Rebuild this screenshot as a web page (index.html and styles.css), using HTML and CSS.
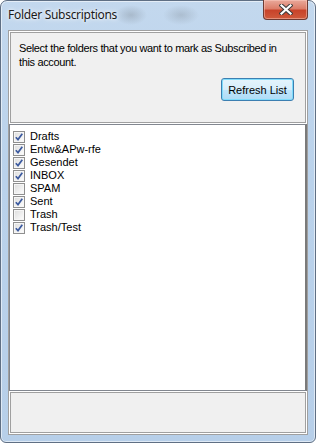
FILE: index.html
```html
<!DOCTYPE html>
<html lang="en">
<head>
    <meta charset="UTF-8">
    <title>Folder Subscriptions</title>
    <link rel="stylesheet" href="styles.css">
</head>
<body>
    <div class="window">
        <div class="titlebar">
            <span class="title">Folder Subscriptions</span>
            <button class="close-btn" title="Close">
                <svg width="14" height="11" viewBox="0 0 14 11">
                    <path d="M2.5 1.5 L11.5 9.5 M11.5 1.5 L2.5 9.5" stroke="#3b3b3b" stroke-width="4.2" stroke-linecap="square"/>
                    <path d="M2.5 1.5 L11.5 9.5 M11.5 1.5 L2.5 9.5" stroke="#fff" stroke-width="2.2" stroke-linecap="square"/>
                </svg>
            </button>
        </div>

        <div class="client">
            <div class="panel top-panel">
                <p class="intro">Select the folders that you want to mark as Subscribed in this account.</p>
                <div class="actions">
                    <button class="btn default">Refresh List</button>
                </div>
            </div>

            <ul class="folder-list">
                <li><span class="check on"><svg width="8" height="8" viewBox="0 0 8 8"><path d="M0.8 4.2 L3 6.6 L7.3 0.8" fill="none" stroke="#3c5a9f" stroke-width="1.7"/></svg></span>Drafts</li>
                <li><span class="check on"><svg width="8" height="8" viewBox="0 0 8 8"><path d="M0.8 4.2 L3 6.6 L7.3 0.8" fill="none" stroke="#3c5a9f" stroke-width="1.7"/></svg></span>Entw&amp;APw-rfe</li>
                <li><span class="check on"><svg width="8" height="8" viewBox="0 0 8 8"><path d="M0.8 4.2 L3 6.6 L7.3 0.8" fill="none" stroke="#3c5a9f" stroke-width="1.7"/></svg></span>Gesendet</li>
                <li><span class="check on"><svg width="8" height="8" viewBox="0 0 8 8"><path d="M0.8 4.2 L3 6.6 L7.3 0.8" fill="none" stroke="#3c5a9f" stroke-width="1.7"/></svg></span>INBOX</li>
                <li><span class="check"></span>SPAM</li>
                <li><span class="check on"><svg width="8" height="8" viewBox="0 0 8 8"><path d="M0.8 4.2 L3 6.6 L7.3 0.8" fill="none" stroke="#3c5a9f" stroke-width="1.7"/></svg></span>Sent</li>
                <li><span class="check"></span>Trash</li>
                <li><span class="check on"><svg width="8" height="8" viewBox="0 0 8 8"><path d="M0.8 4.2 L3 6.6 L7.3 0.8" fill="none" stroke="#3c5a9f" stroke-width="1.7"/></svg></span>Trash/Test</li>
            </ul>

            <div class="panel bottom-panel"></div>
        </div>
    </div>
</body>
</html>
```

FILE: styles.css
```css
body {
    margin: 0;
    background-color: #fff;
    font-family: "Liberation Sans", Arial, sans-serif;
}

.window {
    position: relative;
    width: 316px;
    height: 443px;
    box-sizing: border-box;
    border: 1px solid #5f6f84;
    border-radius: 7px 7px 6px 6px;
    padding: 0 7px 7px 7px;
    background:
        radial-gradient(ellipse 16px 10px at 130px 14px, rgba(120, 130, 140, 0.35), transparent),
        radial-gradient(ellipse 18px 10px at 180px 14px, rgba(120, 130, 140, 0.3), transparent),
        linear-gradient(to bottom, #c3d8ee 0%, #bad2eb 40%, #b7cfe9 100%);
    box-shadow: inset 0 0 0 1px rgba(255, 255, 255, 0.55);
    display: flex;
    flex-direction: column;
}

.titlebar {
    height: 29px;
    display: flex;
    align-items: center;
}

.title {
    font-family: "Noto Sans", "Open Sans", sans-serif;
    font-size: 12px;
    letter-spacing: -0.3px;
    color: #1a1a1a;
    margin-top: -3px;
    text-shadow: 0 0 6px rgba(255, 255, 255, 0.95), 0 0 3px rgba(255, 255, 255, 0.9);
}

.close-btn {
    position: absolute;
    top: -1px;
    right: 7px;
    width: 45px;
    height: 20px;
    padding: 0;
    border: 1px solid #6d3a33;
    border-top: none;
    border-radius: 0 0 4px 4px;
    background: linear-gradient(to bottom, #e9a99b 0%, #dc7e6a 45%, #c8432a 55%, #cf5a3c 100%);
    box-shadow: inset 0 0 0 1px rgba(255, 210, 200, 0.45);
    display: flex;
    align-items: center;
    justify-content: center;
}

.client {
    flex: 1;
    background-color: #f0f0f0;
    border: 1px solid #a0a0a0;
    display: flex;
    flex-direction: column;
    font-size: 11px;
    color: #000;
}

.panel {
    border: 1px solid #fff;
    box-shadow: inset 0 0 0 1px #a0a0a0;
    box-sizing: border-box;
}

.top-panel {
    height: 93px;
    padding: 9px 12px 0 9px;
}

.intro {
    margin: 0;
    line-height: 14px;
    letter-spacing: -0.35px;
}

.actions {
    display: flex;
    justify-content: flex-end;
    margin-top: 9px;
}

.btn {
    width: 73px;
    height: 23px;
    font-family: "Liberation Sans", Arial, sans-serif;
    font-size: 11px;
    color: #000;
    border: 1px solid #3c7fb1;
    border-radius: 3px;
    background: linear-gradient(to bottom, #e5f4fc 0%, #d6eefb 50%, #bfe5fb 51%, #aedcf6 100%);
    box-shadow: inset 0 0 0 1px #7fdcfb;
    padding: 0;
}

.folder-list {
    flex: 1;
    list-style: none;
    margin: 0;
    padding: 5px 0 0 3px;
    background-color: #fff;
    border: 1px solid #828790;
    border-right: 2px solid #7a7a7a;
}

.folder-list li {
    height: 13px;
    line-height: 13px;
    display: flex;
    align-items: center;
}

.check {
    width: 12px;
    height: 12px;
    box-sizing: border-box;
    margin-right: 5px;
    border: 1px solid #8f8f8f;
    background: linear-gradient(135deg, #dcdcdc 0%, #f4f4f4 70%, #fff 100%);
    box-shadow: inset 0 0 0 1px #f6f6f6;
    display: flex;
    align-items: center;
    justify-content: center;
}

.check svg {
    display: block;
}

.bottom-panel {
    height: 43px;
}
```
